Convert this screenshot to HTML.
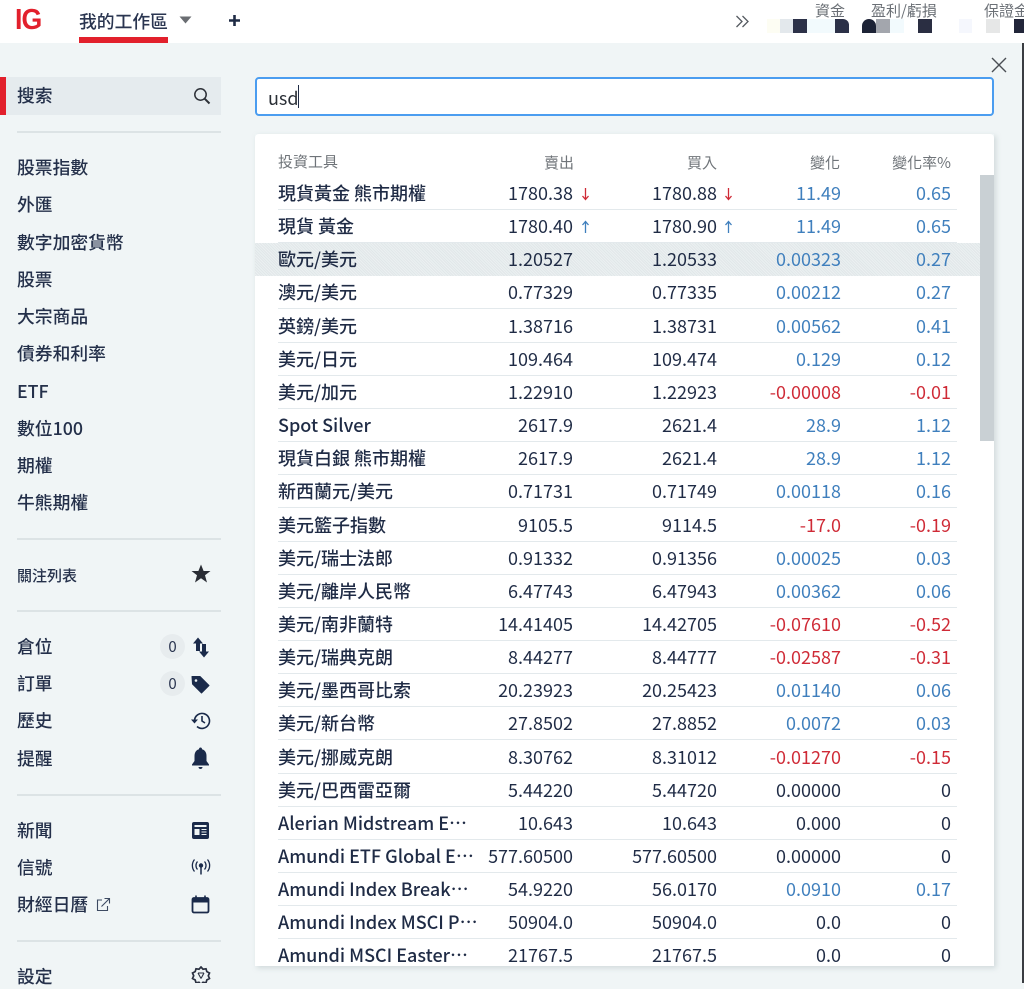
<!DOCTYPE html>
<html lang="zh-Hant"><head><meta charset="utf-8"><title>IG</title>
<style>
html,body{margin:0;padding:0}
body{width:1024px;height:983px;position:relative;overflow:hidden;background:#f0f5f6;font-family:"Noto Sans CJK TC","Liberation Sans",sans-serif;color:#1f2b45}
.a{position:absolute;white-space:nowrap}
#hdr{position:absolute;left:0;top:0;width:1024px;height:43px;background:#fff}
.blk{position:absolute;height:14px;top:19px}
.m{position:absolute;left:17px;font-size:17.8px;font-weight:500;line-height:24px;color:#24304a;white-space:nowrap}
.d{position:absolute;left:17px;width:204px;height:2px;background:#dce3e5}
.ic{position:absolute}
#panel{position:absolute;left:255px;top:134px;width:739px;height:832px;background:#fff;border-radius:4px 4px 0 0;overflow:hidden}
#shadow{position:absolute;left:255px;top:134px;width:739px;height:832px;box-shadow:2px 2px 5px rgba(150,165,170,.35)}
.h{position:absolute;top:19px;font-size:15px;line-height:20px;color:#6f7479;white-space:nowrap}
#hl{position:absolute;left:0;top:109px;width:725px;height:33px;background:repeating-linear-gradient(45deg,#e1e7e9 0 1px,#ebf0f1 1px 2px)}
.r{position:absolute;left:23px;width:679px;height:32px;border-bottom:1px solid #e3e9ec;font-size:18px;line-height:33px;color:#1f2b45;white-space:nowrap}
.r span{position:absolute;top:0}
.n{left:0;font-weight:500}.s{right:384px}.b{right:240px}.c{right:116px}.p{right:6px}
.u{color:#3f7fbd}.e{color:#cf2a36}
.ar{position:absolute;top:10px}
</style></head><body>

<div id="hdr"></div>
<div class="a" style="left:15px;top:-1px;font:bold 29px/42px 'Liberation Sans',sans-serif;color:#e2202c;letter-spacing:-1px;transform:scaleX(.92);transform-origin:left">IG</div>
<div class="a" style="left:79px;top:9px;font-size:17.8px;font-weight:500;line-height:24px;color:#2a3550">我的工作區</div>
<div class="a" style="left:79px;top:37px;width:89px;height:6px;background:#e2202c"></div>
<svg class="ic" style="left:179px;top:16px" width="13" height="8"><path d="M0.5 0.5H12.5L6.5 7.5Z" fill="#6a6d72"/></svg>
<svg class="ic" style="left:228px;top:14px" width="13" height="13"><path d="M6.5 1V12M1 6.5H12" stroke="#1f2b45" stroke-width="2.6"/></svg>
<svg class="ic" style="left:735px;top:14px" width="15" height="15" fill="none" stroke="#555a60" stroke-width="1.3"><path d="M1.5 2L7 7.5L1.5 13M7.5 2L13 7.5L7.5 13"/></svg>
<div class="a" style="left:815px;top:1px;font-size:15px;line-height:20px;color:#6b7076">資金</div>
<div class="a" style="left:871px;top:1px;font-size:15px;line-height:20px;color:#6b7076">盈利/虧損</div>
<div class="a" style="left:984px;top:1px;font-size:15px;line-height:20px;color:#6b7076">保證金</div>
<div class="blk" style="left:767px;width:13px;background:#fdfdf3"></div>
<div class="blk" style="left:780px;width:13px;background:#e3e8ec"></div>
<div class="blk" style="left:793px;width:14px;background:#2c3148"></div>
<div class="blk" style="left:807px;width:28px;background:#f2fafd"></div>
<div class="blk" style="left:835px;width:14px;background:#2c3148;border-radius:0 6px 0 0"></div>
<div class="blk" style="left:862px;width:14px;background:#1d2336;border-radius:7px 7px 0 0"></div>
<div class="blk" style="left:876px;width:14px;background:#a3a6ad"></div>
<div class="blk" style="left:890px;width:14px;background:#f2fafd"></div>
<div class="blk" style="left:918px;width:14px;background:#2a2e42"></div>
<div class="blk" style="left:959px;width:13px;background:#f5f7fd"></div>
<div class="blk" style="left:986px;width:14px;background:#e6e7e7"></div>
<div class="blk" style="left:1014px;width:10px;background:#22263a"></div>
<div class="a" style="left:1022px;top:43px;width:2px;height:940px;background:#3a3d42"></div>

<svg class="ic" style="left:990px;top:56px" width="18" height="18" fill="none" stroke="#4a4e54" stroke-width="1.4"><path d="M2 2L16 16M16 2L2 16"/></svg>

<div class="a" style="left:0;top:77px;width:6px;height:38px;background:#e2202c"></div>
<div class="a" style="left:6px;top:77px;width:215px;height:38px;background:#e5ebee"></div>
<div class="m" style="top:83px">搜索</div>
<svg class="ic" style="left:193px;top:87px" width="18" height="18" fill="none" stroke="#2d3138" stroke-width="1.5"><circle cx="7.5" cy="7.5" r="5.7"/><path d="M11.8 11.8L16.5 16.5" stroke-width="2"/></svg>
<div class="d" style="top:130.500px"></div>

<div class="m" style="top:155px">股票指數</div>
<div class="m" style="top:192px">外匯</div>
<div class="m" style="top:230px">數字加密貨幣</div>
<div class="m" style="top:267px">股票</div>
<div class="m" style="top:304px">大宗商品</div>
<div class="m" style="top:341px">債券和利率</div>
<div class="m" style="top:379px">ETF</div>
<div class="m" style="top:416px">數位100</div>
<div class="m" style="top:453px">期權</div>
<div class="m" style="top:490px">牛熊期權</div>
<div class="d" style="top:538px"></div>

<div class="m" style="top:564px;font-size:15px">關注列表</div>
<svg class="ic" style="left:191px;top:564px" width="20" height="19"><path d="M10 .5L12.6 7H19.5L14 11.3L16 18.5L10 14.3L4 18.5L6 11.3L.5 7H7.4Z" fill="#2a2d35"/></svg>
<div class="d" style="top:610px"></div>

<div class="m" style="top:634px">倉位</div>
<div class="a" style="left:160px;top:634px;width:25px;height:25px;border-radius:50%;background:#e7ecee;text-align:center;font-size:15px;line-height:25px;color:#2a3550">0</div>
<svg class="ic" style="left:192px;top:637px" width="18" height="21" fill="#1a2a4a"><path d="M6 .5L11 6.5H8V14H4V6.5H1Z"/><path d="M12 20.5L7 14.5H10V7H14V14.5H17Z"/></svg>
<div class="m" style="top:671px">訂單</div>
<div class="a" style="left:160px;top:671px;width:25px;height:25px;border-radius:50%;background:#e7ecee;text-align:center;font-size:15px;line-height:25px;color:#2a3550">0</div>
<svg class="ic" style="left:191px;top:675px" width="19" height="19"><path d="M1 1.5H9L18 10.5L10.5 18L1.500 9Z" fill="#1a2a4a" stroke="#1a2a4a" stroke-linejoin="round"/><circle cx="5" cy="5.500" r="1.300" fill="#f0f5f6"/></svg>
<div class="m" style="top:708px">歷史</div>
<svg class="ic" style="left:190px;top:711px" width="21" height="19" fill="none" stroke="#1a2a4a" stroke-width="1.600"><path d="M4.500 9.500A7.500 7.500 0 1 1 7 15.500"/><path d="M12 5V10L15 12"/><path d="M1 8.500H8L4.500 12.500Z" fill="#1a2a4a" stroke="none"/></svg>
<div class="m" style="top:746px">提醒</div>
<svg class="ic" style="left:191px;top:747px" width="19" height="23" fill="#1a2a4a"><path d="M9.500 .5C10.500.5 11 1.200 11 2.200C14 3 15.500 5.500 15.500 9V14L18 17.500V18.500H1V17.500L3.500 14V9C3.500 5.500 5 3 8 2.200C8 1.200 8.500.5 9.500.5Z"/><path d="M7.500 20H11.500C11.500 21.300 10.500 22 9.500 22S7.500 21.300 7.500 20Z"/></svg>
<div class="d" style="top:794px"></div>

<div class="m" style="top:818px">新聞</div>
<svg class="ic" style="left:192px;top:821px" width="18" height="18"><rect x="0" y="1" width="17" height="17" rx="2" fill="#1a2a4a"/><rect x="2.500" y="4" width="12" height="2" fill="#f0f5f6"/><rect x="2.500" y="8" width="5" height="6" fill="#f0f5f6"/><path d="M9.500 8.500H14.500M9.500 11H14.500M9.500 13.500H14.500" stroke="#f0f5f6" stroke-width="1"/></svg>
<div class="m" style="top:855px">信號</div>
<svg class="ic" style="left:191px;top:858px" width="20" height="18" fill="none" stroke="#1a2a4a" stroke-width="1.300"><circle cx="10" cy="7.500" r="2.200" fill="#1a2a4a" stroke="none"/><path d="M10 8V16.500" stroke-width="1.500"/><path d="M6.500 3.500A6 6 0 0 0 6.500 11.500M13.500 3.500A6 6 0 0 1 13.500 11.500M3.500 1.500A9.500 9.500 0 0 0 3.500 13.500M16.500 1.500A9.500 9.500 0 0 1 16.500 13.500"/></svg>
<div class="m" style="top:892px">財經日曆</div>
<svg class="ic" style="left:96px;top:897px" width="15" height="15" fill="none" stroke="#3d4a62" stroke-width="1.100"><path d="M6 3H1.500V13.500H11.500V9"/><path d="M5.500 9.500L13 2M8.500 1.500H13.500V6.500"/></svg>
<svg class="ic" style="left:191px;top:895px" width="19" height="19" fill="none" stroke="#1a2a4a"><rect x="1.500" y="3" width="16" height="14.500" rx="1.500" stroke-width="1.800"/><path d="M1.500 5.500H17.500" stroke-width="4"/><path d="M5 .5V4M14 .5V4" stroke-width="1.600"/></svg>
<div class="d" style="top:940px"></div>
<div class="m" style="top:964px">設定</div>
<svg class="ic" style="left:191px;top:966px" width="20" height="17" fill="none" stroke="#2a3040" stroke-width="1.700"><path d="M10 1L12 3.200L15 2.800L15.800 5.600L18.500 7L17.300 9.800L18.500 12.500L15.800 14L15 16.800L12 16.300L10 18.500L8 16.300L5 16.800L4.200 14L1.500 12.500L2.700 9.800L1.500 7L4.200 5.600L5 2.800L8 3.200Z"/><path d="M7 7H13M7 7L10 12.500M13 7L10 12.500" stroke-width="1.100"/></svg>

<div class="a" style="left:255px;top:77px;width:735px;height:35px;border:2px solid #4b9df0;border-radius:4px;background:#fff"></div>
<div class="a" style="left:268px;top:85px;font-size:18px;line-height:26px;color:#2a2f36">usd</div>
<div class="a" style="left:298px;top:85px;width:1px;height:23px;background:#1f2b45"></div>

<div id="shadow"></div>
<div id="panel">
<div class="h" style="left:23px;top:18px">投資工具</div>
<div class="h" style="right:420px">賣出</div>
<div class="h" style="right:277px">買入</div>
<div class="h" style="right:154px">變化</div>
<div class="h" style="right:43px">變化率%</div>
<div id="hl"></div>

<div class="r" style="top:43px"><span class="n">現貨黃金 熊市期權</span><span class="s">1780.38</span><svg class="ar" style="left:303px" width="9" height="14" fill="none" stroke="#cf2a36" stroke-width="1.300"><path d="M4.500 1V12M1.500 9L4.500 12.500L7.500 9"/></svg><span class="b">1780.88</span><svg class="ar" style="left:446px" width="9" height="14" fill="none" stroke="#cf2a36" stroke-width="1.300"><path d="M4.500 1V12M1.500 9L4.500 12.500L7.500 9"/></svg><span class="c u">11.49</span><span class="p u">0.65</span></div>
<div class="r" style="top:76.150px"><span class="n">現貨 黃金</span><span class="s">1780.40</span><svg class="ar" style="left:303px" width="9" height="14" fill="none" stroke="#3f7fbd" stroke-width="1.300"><path d="M4.500 13V2M1.500 5L4.500 1.500L7.500 5"/></svg><span class="b">1780.90</span><svg class="ar" style="left:446px" width="9" height="14" fill="none" stroke="#3f7fbd" stroke-width="1.300"><path d="M4.500 13V2M1.500 5L4.500 1.500L7.500 5"/></svg><span class="c u">11.49</span><span class="p u">0.65</span></div>
<div class="r" style="top:109.300px;border-color:transparent"><span class="n">歐元/美元</span><span class="s">1.20527</span><span class="b">1.20533</span><span class="c u">0.00323</span><span class="p u">0.27</span></div>
<div class="r" style="top:142.450px"><span class="n">澳元/美元</span><span class="s">0.77329</span><span class="b">0.77335</span><span class="c u">0.00212</span><span class="p u">0.27</span></div>
<div class="r" style="top:175.600px"><span class="n">英鎊/美元</span><span class="s">1.38716</span><span class="b">1.38731</span><span class="c u">0.00562</span><span class="p u">0.41</span></div>
<div class="r" style="top:208.750px"><span class="n">美元/日元</span><span class="s">109.464</span><span class="b">109.474</span><span class="c u">0.129</span><span class="p u">0.12</span></div>
<div class="r" style="top:241.900px"><span class="n">美元/加元</span><span class="s">1.22910</span><span class="b">1.22923</span><span class="c e">-0.00008</span><span class="p e">-0.01</span></div>
<div class="r" style="top:275.050px"><span class="n">Spot Silver</span><span class="s">2617.9</span><span class="b">2621.4</span><span class="c u">28.9</span><span class="p u">1.12</span></div>
<div class="r" style="top:308.200px"><span class="n">現貨白銀 熊市期權</span><span class="s">2617.9</span><span class="b">2621.4</span><span class="c u">28.9</span><span class="p u">1.12</span></div>
<div class="r" style="top:341.350px"><span class="n">新西蘭元/美元</span><span class="s">0.71731</span><span class="b">0.71749</span><span class="c u">0.00118</span><span class="p u">0.16</span></div>
<div class="r" style="top:374.500px"><span class="n">美元籃子指數</span><span class="s">9105.5</span><span class="b">9114.5</span><span class="c e">-17.0</span><span class="p e">-0.19</span></div>
<div class="r" style="top:407.650px"><span class="n">美元/瑞士法郎</span><span class="s">0.91332</span><span class="b">0.91356</span><span class="c u">0.00025</span><span class="p u">0.03</span></div>
<div class="r" style="top:440.800px"><span class="n">美元/離岸人民幣</span><span class="s">6.47743</span><span class="b">6.47943</span><span class="c u">0.00362</span><span class="p u">0.06</span></div>
<div class="r" style="top:473.950px"><span class="n">美元/南非蘭特</span><span class="s">14.41405</span><span class="b">14.42705</span><span class="c e">-0.07610</span><span class="p e">-0.52</span></div>
<div class="r" style="top:507.100px"><span class="n">美元/瑞典克朗</span><span class="s">8.44277</span><span class="b">8.44777</span><span class="c e">-0.02587</span><span class="p e">-0.31</span></div>
<div class="r" style="top:540.250px"><span class="n">美元/墨西哥比索</span><span class="s">20.23923</span><span class="b">20.25423</span><span class="c u">0.01140</span><span class="p u">0.06</span></div>
<div class="r" style="top:573.400px"><span class="n">美元/新台幣</span><span class="s">27.8502</span><span class="b">27.8852</span><span class="c u">0.0072</span><span class="p u">0.03</span></div>
<div class="r" style="top:606.550px"><span class="n">美元/挪威克朗</span><span class="s">8.30762</span><span class="b">8.31012</span><span class="c e">-0.01270</span><span class="p e">-0.15</span></div>
<div class="r" style="top:639.700px"><span class="n">美元/巴西雷亞爾</span><span class="s">5.44220</span><span class="b">5.44720</span><span class="c">0.00000</span><span class="p">0</span></div>
<div class="r" style="top:672.850px"><span class="n">Alerian Midstream E⋯</span><span class="s">10.643</span><span class="b">10.643</span><span class="c">0.000</span><span class="p">0</span></div>
<div class="r" style="top:706px"><span class="n">Amundi ETF Global E⋯</span><span class="s">577.60500</span><span class="b">577.60500</span><span class="c">0.00000</span><span class="p">0</span></div>
<div class="r" style="top:739.150px"><span class="n">Amundi Index Break⋯</span><span class="s">54.9220</span><span class="b">56.0170</span><span class="c u">0.0910</span><span class="p u">0.17</span></div>
<div class="r" style="top:772.300px"><span class="n">Amundi Index MSCI P⋯</span><span class="s">50904.0</span><span class="b">50904.0</span><span class="c">0.0</span><span class="p">0</span></div>
<div class="r" style="top:805.450px"><span class="n">Amundi MSCI Easter⋯</span><span class="s">21767.5</span><span class="b">21767.5</span><span class="c">0.0</span><span class="p">0</span></div>

<div class="a" style="left:725px;top:41px;width:14px;height:266px;background:#c9d0d4"></div>
</div>
</body></html>
